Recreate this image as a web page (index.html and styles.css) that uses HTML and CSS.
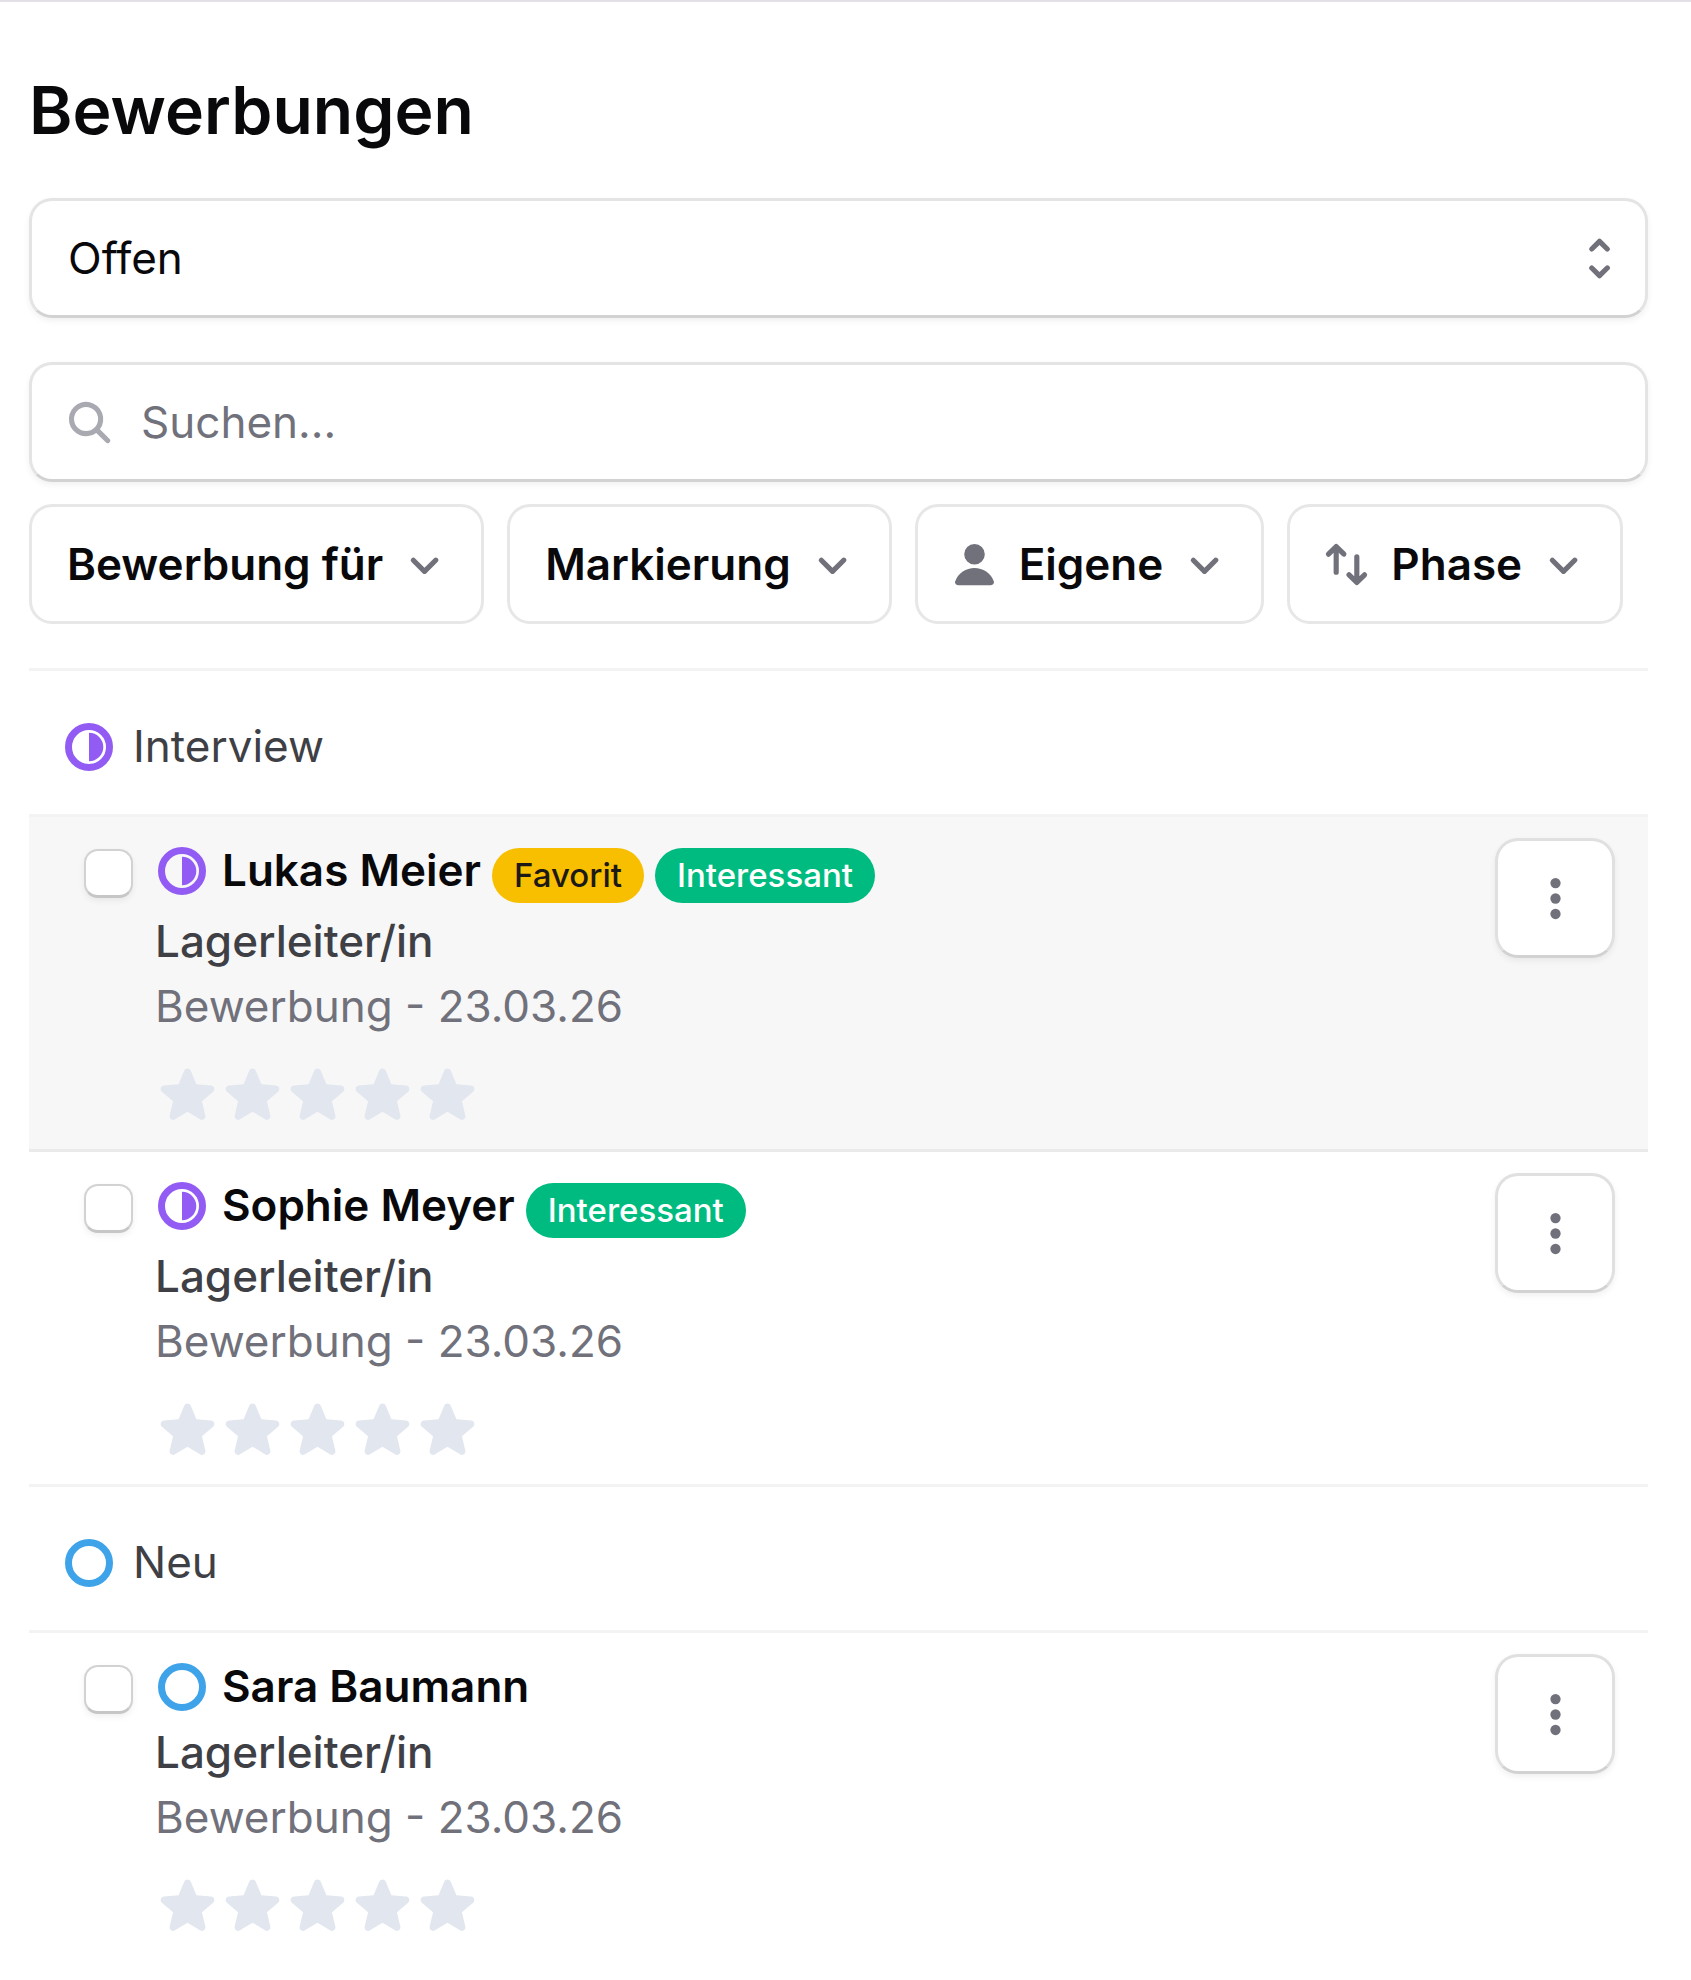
FILE: index.html
```html
<!DOCTYPE html>
<html lang="de">
<head>
<meta charset="utf-8">
<meta name="viewport" content="width=device-width, initial-scale=1">
<title>Bewerbungen</title>
<link rel="stylesheet" href="styles.css">
</head>
<body>
<svg class="sprite" aria-hidden="true">
  <symbol id="chevron-down" viewBox="0 0 16 16"><path d="M4.22 6.22a.75.75 0 0 1 1.06 0L8 8.94l2.72-2.72a.75.75 0 1 1 1.06 1.06l-3.25 3.25a.75.75 0 0 1-1.06 0L4.22 7.28a.75.75 0 0 1 0-1.06Z"/></symbol>
  <symbol id="chevron-up-down" viewBox="0 0 16 16"><path d="M5.22 10.22a.75.75 0 0 1 1.06 0L8 11.94l1.72-1.72a.75.75 0 1 1 1.06 1.06l-2.25 2.25a.75.75 0 0 1-1.06 0l-2.25-2.25a.75.75 0 0 1 0-1.06ZM10.78 5.78a.75.75 0 0 1-1.06 0L8 4.06 6.28 5.78a.75.75 0 0 1-1.06-1.06l2.25-2.25a.75.75 0 0 1 1.06 0l2.25 2.25a.75.75 0 0 1 0 1.06Z"/></symbol>
  <symbol id="search" viewBox="0 0 16 16"><path fill-rule="evenodd" d="M9.965 11.026a5 5 0 1 1 1.06-1.06l2.755 2.754a.75.75 0 1 1-1.06 1.06l-2.755-2.754ZM10.5 7a3.5 3.5 0 1 1-7 0 3.5 3.5 0 0 1 7 0Z"/></symbol>
  <symbol id="user" viewBox="0 0 16 16"><path d="M8 8a3 3 0 1 0 0-6 3 3 0 0 0 0 6ZM12.735 14c.618 0 1.093-.561.872-1.139a6.002 6.002 0 0 0-11.215 0c-.22.578.254 1.139.872 1.139h9.47Z"/></symbol>
  <symbol id="arrows" viewBox="0 0 16 16"><path d="M13.78 10.47a.75.75 0 0 1 0 1.06l-2.25 2.25a.75.75 0 0 1-1.06 0l-2.25-2.25a.75.75 0 1 1 1.06-1.06l.97.97V5.75a.75.75 0 0 1 1.5 0v5.69l.97-.97a.75.75 0 0 1 1.06 0ZM2.22 5.53a.75.75 0 0 1 0-1.06l2.25-2.25a.75.75 0 0 1 1.06 0l2.25 2.25a.75.75 0 0 1-1.06 1.06l-.97-.97v5.69a.75.75 0 0 1-1.5 0V4.56l-.97.97a.75.75 0 0 1-1.06 0Z"/></symbol>
  <symbol id="dots" viewBox="0 0 16 16"><circle cx="8" cy="3.5" r="1.5"/><circle cx="8" cy="8" r="1.5"/><circle cx="8" cy="12.5" r="1.5"/></symbol>
  <symbol id="star" viewBox="0 0 24 24"><path d="M10.788 3.21c.448-1.077 1.976-1.077 2.424 0l2.082 5.006 5.404.434c1.164.093 1.636 1.545.749 2.305l-4.117 3.527 1.257 5.273c.271 1.136-.964 2.033-1.96 1.425L12 18.354 7.373 21.18c-.996.608-2.231-.29-1.96-1.425l1.257-5.273-4.117-3.527c-.887-.76-.415-2.212.749-2.305l5.404-.434 2.082-5.005Z"/></symbol>
  <symbol id="phase-half" viewBox="0 0 48 48"><circle cx="24" cy="24" r="20.5" fill="none" stroke="currentColor" stroke-width="7"/><path d="M24 9.7a14.3 14.3 0 0 1 0 28.6Z"/></symbol>
  <symbol id="phase-new" viewBox="0 0 48 48"><circle cx="24" cy="24" r="20.5" fill="none" stroke="currentColor" stroke-width="7"/></symbol>
</svg>

<main class="page">
  <h1 class="title">Bewerbungen</h1>

  <div class="field">
    <select class="control select" aria-label="Status">
      <option>Offen</option>
    </select>
    <svg class="icon field-icon-end"><use href="#chevron-up-down"/></svg>
  </div>

  <div class="field">
    <svg class="icon field-icon-start"><use href="#search"/></svg>
    <input class="control search" type="search" placeholder="Suchen..." aria-label="Suchen">
  </div>

  <div class="filters">
    <button class="filter" type="button">Bewerbung für<svg class="icon filter-chevron"><use href="#chevron-down"/></svg></button>
    <button class="filter" type="button">Markierung<svg class="icon filter-chevron"><use href="#chevron-down"/></svg></button>
    <button class="filter" type="button"><svg class="icon filter-icon"><use href="#user"/></svg>Eigene<svg class="icon filter-chevron"><use href="#chevron-down"/></svg></button>
    <button class="filter" type="button"><svg class="icon filter-icon"><use href="#arrows"/></svg>Phase<svg class="icon filter-chevron"><use href="#chevron-down"/></svg></button>
  </div>

  <section class="group">
    <h2 class="group-title"><svg class="phase interview"><use href="#phase-half"/></svg>Interview</h2>
    <ul class="list">
      <li class="row active">
        <input class="check" type="checkbox" aria-label="Lukas Meier auswählen">
        <div class="body">
          <div class="name-line tagged">
            <svg class="phase interview"><use href="#phase-half"/></svg>
            <h3 class="name">Lukas Meier</h3>
            <span class="badge favorite">Favorit</span>
            <span class="badge interesting">Interessant</span>
          </div>
          <p class="job">Lagerleiter/in</p>
          <p class="meta">Bewerbung - 23.03.26</p>
          <div class="stars">
            <button class="star" type="button" aria-label="1 Stern"><svg class="star-icon"><use href="#star"/></svg></button>
            <button class="star" type="button" aria-label="2 Sterne"><svg class="star-icon"><use href="#star"/></svg></button>
            <button class="star" type="button" aria-label="3 Sterne"><svg class="star-icon"><use href="#star"/></svg></button>
            <button class="star" type="button" aria-label="4 Sterne"><svg class="star-icon"><use href="#star"/></svg></button>
            <button class="star" type="button" aria-label="5 Sterne"><svg class="star-icon"><use href="#star"/></svg></button>
          </div>
        </div>
        <button class="menu" type="button" aria-label="Aktionen"><svg class="icon"><use href="#dots"/></svg></button>
      </li>
      <li class="row">
        <input class="check" type="checkbox" aria-label="Sophie Meyer auswählen">
        <div class="body">
          <div class="name-line tagged">
            <svg class="phase interview"><use href="#phase-half"/></svg>
            <h3 class="name">Sophie Meyer</h3>
            <span class="badge interesting">Interessant</span>
          </div>
          <p class="job">Lagerleiter/in</p>
          <p class="meta">Bewerbung - 23.03.26</p>
          <div class="stars">
            <button class="star" type="button" aria-label="1 Stern"><svg class="star-icon"><use href="#star"/></svg></button>
            <button class="star" type="button" aria-label="2 Sterne"><svg class="star-icon"><use href="#star"/></svg></button>
            <button class="star" type="button" aria-label="3 Sterne"><svg class="star-icon"><use href="#star"/></svg></button>
            <button class="star" type="button" aria-label="4 Sterne"><svg class="star-icon"><use href="#star"/></svg></button>
            <button class="star" type="button" aria-label="5 Sterne"><svg class="star-icon"><use href="#star"/></svg></button>
          </div>
        </div>
        <button class="menu" type="button" aria-label="Aktionen"><svg class="icon"><use href="#dots"/></svg></button>
      </li>
    </ul>
  </section>

  <section class="group">
    <h2 class="group-title"><svg class="phase new"><use href="#phase-new"/></svg>Neu</h2>
    <ul class="list">
      <li class="row">
        <input class="check" type="checkbox" aria-label="Sara Baumann auswählen">
        <div class="body">
          <div class="name-line">
            <svg class="phase new"><use href="#phase-new"/></svg>
            <h3 class="name">Sara Baumann</h3>
          </div>
          <p class="job">Lagerleiter/in</p>
          <p class="meta">Bewerbung - 23.03.26</p>
          <div class="stars">
            <button class="star" type="button" aria-label="1 Stern"><svg class="star-icon"><use href="#star"/></svg></button>
            <button class="star" type="button" aria-label="2 Sterne"><svg class="star-icon"><use href="#star"/></svg></button>
            <button class="star" type="button" aria-label="3 Sterne"><svg class="star-icon"><use href="#star"/></svg></button>
            <button class="star" type="button" aria-label="4 Sterne"><svg class="star-icon"><use href="#star"/></svg></button>
            <button class="star" type="button" aria-label="5 Sterne"><svg class="star-icon"><use href="#star"/></svg></button>
          </div>
        </div>
        <button class="menu" type="button" aria-label="Aktionen"><svg class="icon"><use href="#dots"/></svg></button>
      </li>
    </ul>
  </section>
</main>
</body>
</html>
```
FILE: styles.css
```css
* {
  box-sizing: border-box;
}

body {
  margin: 0;
  background: #fff;
  color: #09090b;
  font-family: Inter, "Liberation Sans", sans-serif;
  font-size: 44px;
  line-height: 65px;
}

h1, h2, h3, p, ul {
  margin: 0;
  padding: 0;
}

button, input, select {
  margin: 0;
  color: inherit;
  font: inherit;
}

.sprite {
  display: none;
}

.page {
  padding: 68px 43px 0 29px;
  border-top: 2px solid #e4e0e7;
}

.title {
  margin-bottom: 48px;
  font-size: 66px;
  font-weight: 600;
  line-height: 80px;
}

.icon {
  display: block;
  flex: none;
  width: 55px;
  height: 55px;
  fill: #71717b;
}

/* Form fields */

.field {
  display: grid;
  align-items: center;
  margin-bottom: 44px;
}

.field + .field {
  margin-bottom: 22px;
}

.field > * {
  grid-area: 1 / 1;
}

.control {
  appearance: none;
  width: 100%;
  height: 120px;
  padding: 0 36px;
  border: 3px solid #e4e4e4;
  border-bottom-color: #d2d2d2;
  border-radius: 23px;
  background: #fff;
  box-shadow: 0 3px 6px rgb(0 0 0 / 6%);
  outline: none;
}

.search {
  padding-left: 109px;
}

.search::placeholder {
  color: #71717b;
  opacity: 1;
}

.field-icon-start,
.field-icon-end {
  z-index: 1;
  pointer-events: none;
}

.field-icon-start {
  margin-left: 33px;
  fill: #a9a9b1;
}

.field-icon-end {
  justify-self: end;
  margin-right: 21px;
}

/* Filter bar */

.filters {
  display: flex;
  flex-wrap: wrap;
  gap: 23px;
  margin-bottom: 44px;
}

.filter {
  display: flex;
  align-items: center;
  height: 120px;
  padding: 0 29px 0 35px;
  border: 3px solid #e7e7e7;
  border-radius: 23px;
  background: #fff;
  font-weight: 600;
  white-space: nowrap;
}

.filter-icon {
  margin: 0 17px 0 -6px;
}

.filter-chevron {
  margin-left: 14px;
}

/* Groups and rows */

.group-title {
  display: flex;
  align-items: center;
  gap: 20px;
  padding: 43px 36px 35px;
  border-top: 3px solid #f3f3f4;
  color: #3f3f46;
  font-size: 44px;
  font-weight: 400;
}

.phase {
  display: block;
  flex: none;
  width: 48px;
  height: 48px;
  fill: currentColor;
}

.interview {
  color: #925cf4;
}

.new {
  color: #3fa3e9;
}

.list {
  list-style: none;
}

.row {
  display: flex;
  align-items: flex-start;
  padding: 21px 33px 22px 55px;
  border-top: 3px solid #f3f3f4;
}

.active {
  background: #f7f7f7;
}

.active + .row {
  border-top-color: #eaeaeb;
}

.check {
  appearance: none;
  flex: none;
  width: 49px;
  height: 49px;
  margin: 11px 22px 0 0;
  border: 2px solid #d2d2d2;
  border-bottom: 3px solid #c6c6c6;
  border-radius: 14px;
  background: #fff;
  box-shadow: 0 3px 6px rgb(0 0 0 / 6%);
}

.body {
  flex: 1;
  min-width: 0;
}

.name-line {
  display: flex;
  align-items: center;
  gap: 11px;
  height: 65px;
  padding-left: 3px;
}

.name-line .phase {
  margin-right: 5px;
}

.tagged {
  margin-bottom: 5px;
}

.name {
  font-size: 44px;
  font-weight: 600;
}

.badge {
  margin-top: 10px;
  padding: 0 22px;
  border-radius: 28px;
  font-size: 33px;
  font-weight: 500;
  line-height: 55px;
}

.favorite {
  background: #f8bf00;
  color: #1c1917;
}

.interesting {
  background: #00bb7f;
  color: #fff;
}

.job {
  color: #3f3f46;
  font-weight: 500;
  line-height: 66px;
}

.meta {
  color: #71717b;
}

.stars {
  display: flex;
  margin-top: 23px;
}

.star {
  padding: 0;
  border: 0;
  background: none;
}

.star-icon {
  display: block;
  width: 65px;
  height: 65px;
  fill: #e2e6ef;
}

.menu {
  display: flex;
  align-items: center;
  justify-content: center;
  flex: none;
  width: 120px;
  height: 120px;
  padding: 0;
  border: 3px solid #e0e0e0;
  border-bottom-color: #d2d2d2;
  border-radius: 23px;
  background: #fff;
  box-shadow: 0 3px 6px rgb(0 0 0 / 6%);
}
```
